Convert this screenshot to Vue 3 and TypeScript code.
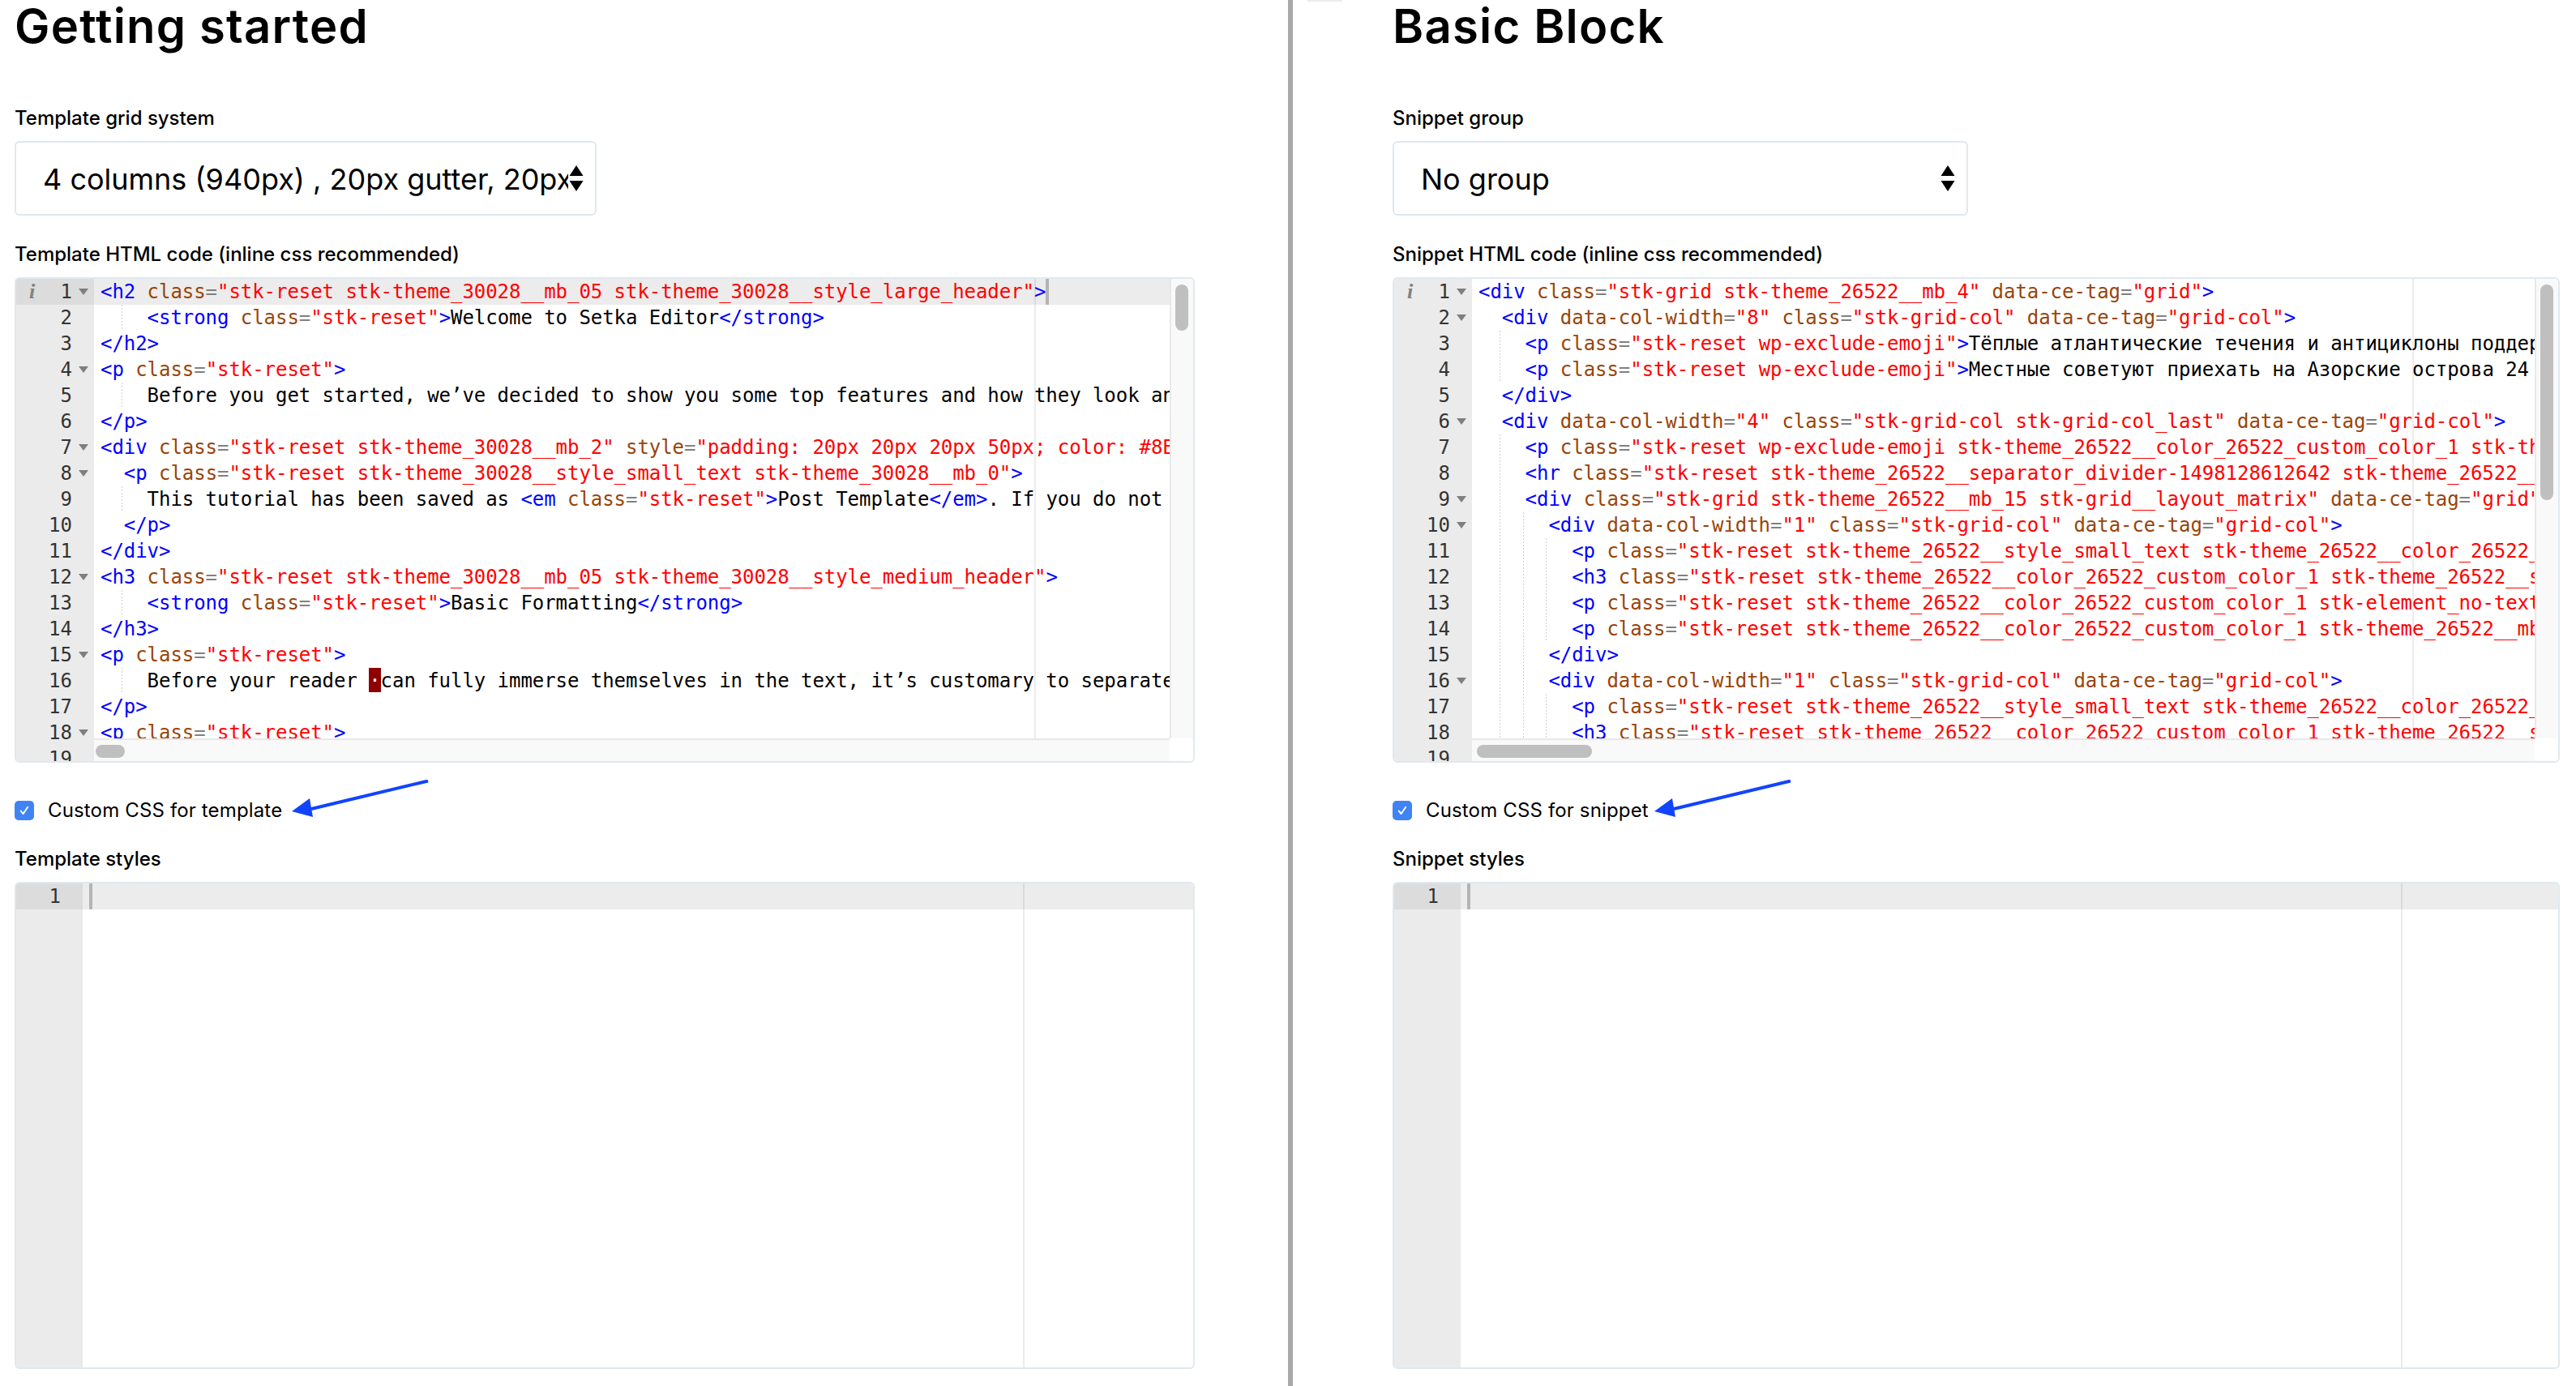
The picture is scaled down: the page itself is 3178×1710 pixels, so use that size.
<script setup lang="ts">
type Token = { t: string; c: string }
type Line = { guides: number; pad: string; tokens: Token[]; fold: boolean; info: boolean; cursor: boolean; active: boolean }

function tokenize(src: string): Token[] {
  const out: Token[] = []
  let i = 0
  let inTag = false
  const push = (t: string, c: string) => { if (t) out.push({ t, c }) }
  while (i < src.length) {
    if (!inTag) {
      const ch = src[i]
      if (ch === '\u0007') { push('·', 'bad'); i++; continue }
      if (ch === '<') {
        const m = /^<\/?[a-z0-9]+/.exec(src.slice(i))
        if (m) { push(m[0], 'tag'); i += m[0].length; inTag = true; continue }
      }
      const next = src.slice(i).search(/[<\u0007]/)
      const len = next === -1 ? src.length - i : Math.max(next, 1)
      push(src.substr(i, len), 'txt')
      i += len
    } else {
      const rest = src.slice(i)
      let m: RegExpExecArray | null
      if ((m = /^\s+/.exec(rest))) { push(m[0], 'txt') }
      else if ((m = /^>/.exec(rest))) { push(m[0], 'tag'); inTag = false }
      else if ((m = /^=/.exec(rest))) { push(m[0], 'eq') }
      else if ((m = /^"[^"]*"?/.exec(rest))) { push(m[0], 'str') }
      else if ((m = /^[^\s=>]+/.exec(rest))) { push(m[0], 'attr') }
      else { m = /^./.exec(rest) as RegExpExecArray; push(m[0], 'txt') }
      i += m[0].length
    }
  }
  return out
}

function build(rows: string[], foldAt: number[], opts: { info?: boolean; active?: boolean } = {}): Line[] {
  return rows.map((src, idx) => {
    const indent = (/^ */.exec(src) as RegExpExecArray)[0].length
    const guides = Math.max(0, Math.floor(indent / 2) - 1)
    const pad = ' '.repeat(indent - guides * 2)
    return {
      guides,
      pad,
      tokens: tokenize(src.slice(indent)),
      fold: foldAt.includes(idx + 1),
      info: !!opts.info && idx === 0,
      cursor: !!opts.active && idx === 0,
      active: !!opts.active && idx === 0,
    }
  })
}

const templateLines = build([
  '<h2 class="stk-reset stk-theme_30028__mb_05 stk-theme_30028__style_large_header">',
  '    <strong class="stk-reset">Welcome to Setka Editor</strong>',
  '</h2>',
  '<p class="stk-reset">',
  '    Before you get started, we’ve decided to show you some top features and how they look and',
  '</p>',
  '<div class="stk-reset stk-theme_30028__mb_2" style="padding: 20px 20px 20px 50px; color: #8B8B8B">',
  '  <p class="stk-reset stk-theme_30028__style_small_text stk-theme_30028__mb_0">',
  '    This tutorial has been saved as <em class="stk-reset">Post Template</em>. If you do not need',
  '  </p>',
  '</div>',
  '<h3 class="stk-reset stk-theme_30028__mb_05 stk-theme_30028__style_medium_header">',
  '    <strong class="stk-reset">Basic Formatting</strong>',
  '</h3>',
  '<p class="stk-reset">',
  '    Before your reader \u0007can fully immerse themselves in the text, it’s customary to separate',
  '</p>',
  '<p class="stk-reset">',
  '',
], [1, 4, 7, 8, 12, 15, 18], { info: true, active: true })

const snippetLines = build([
  '<div class="stk-grid stk-theme_26522__mb_4" data-ce-tag="grid">',
  '  <div data-col-width="8" class="stk-grid-col" data-ce-tag="grid-col">',
  '    <p class="stk-reset wp-exclude-emoji">Тёплые атлантические течения и антициклоны поддерживают',
  '    <p class="stk-reset wp-exclude-emoji">Местные советуют приехать на Азорские острова 24 часа',
  '  </div>',
  '  <div data-col-width="4" class="stk-grid-col stk-grid-col_last" data-ce-tag="grid-col">',
  '    <p class="stk-reset wp-exclude-emoji stk-theme_26522__color_26522_custom_color_1 stk-theme_26522__style',
  '    <hr class="stk-reset stk-theme_26522__separator_divider-1498128612642 stk-theme_26522__color_26522',
  '    <div class="stk-grid stk-theme_26522__mb_15 stk-grid__layout_matrix" data-ce-tag="grid">',
  '      <div data-col-width="1" class="stk-grid-col" data-ce-tag="grid-col">',
  '        <p class="stk-reset stk-theme_26522__style_small_text stk-theme_26522__color_26522_custom',
  '        <h3 class="stk-reset stk-theme_26522__color_26522_custom_color_1 stk-theme_26522__style_custom',
  '        <p class="stk-reset stk-theme_26522__color_26522_custom_color_1 stk-element_no-text stk-theme',
  '        <p class="stk-reset stk-theme_26522__color_26522_custom_color_1 stk-theme_26522__mb_05 stk-reset',
  '      </div>',
  '      <div data-col-width="1" class="stk-grid-col" data-ce-tag="grid-col">',
  '        <p class="stk-reset stk-theme_26522__style_small_text stk-theme_26522__color_26522_custom',
  '        <h3 class="stk-reset stk-theme_26522__color_26522_custom_color_1 stk-theme_26522__style_custom',
  '',
], [1, 2, 6, 9, 10, 16], { info: true })

const panels = [
  {
    title: 'Getting started',
    groupLabel: 'Template grid system',
    selectValue: '4 columns (940px) , 20px gutter, 20px margin',
    selectClass: 'sel-left',
    codeLabel: 'Template HTML code (inline css recommended)',
    lines: templateLines,
    vThumb: 'thumb-v-short',
    hThumb: 'thumb-h-short',
    check: 'Custom CSS for template',
    arrowLeft: 340,
    stylesLabel: 'Template styles',
    cls: 'panel-left',
  },
  {
    title: 'Basic Block',
    groupLabel: 'Snippet group',
    selectValue: 'No group',
    selectClass: 'sel-right',
    codeLabel: 'Snippet HTML code (inline css recommended)',
    lines: snippetLines,
    vThumb: 'thumb-v-long',
    hThumb: 'thumb-h-long',
    check: 'Custom CSS for snippet',
    arrowLeft: 321,
    stylesLabel: 'Snippet styles',
    cls: 'panel-right',
  },
]
</script>

<template>
  <div class="page">
    <span class="top-tab"></span>
    <section v-for="p in panels" :key="p.title" class="panel" :class="p.cls">
      <h1 class="title">{{ p.title }}</h1>

      <div class="label first">{{ p.groupLabel }}</div>
      <div class="select" :class="p.selectClass">
        <span class="select-value">{{ p.selectValue }}</span>
        <svg class="select-arrows" width="18" height="32" viewBox="0 0 18 32">
          <path d="M9 0 L17.5 13 L0.5 13 Z" fill="#000" />
          <path d="M0.5 19 L17.5 19 L9 32 Z" fill="#000" />
        </svg>
      </div>

      <div class="label second">{{ p.codeLabel }}</div>
      <div class="editor editor-code">
        <div class="gutter">
          <div
            v-for="(l, i) in p.lines"
            :key="i"
            class="g-row"
            :class="{ 'g-active': l.active }"
          >
            <span v-if="l.info" class="g-info">i</span>
            <span class="g-num">{{ i + 1 }}</span>
            <span class="g-fold"><i v-if="l.fold" class="fold-tri"></i></span>
          </div>
        </div>
        <div class="main">
          <div class="main-top">
            <div class="code">
              <span class="print-margin"></span>
              <div
                v-for="(l, i) in p.lines"
                :key="i"
                class="c-row"
                :class="{ 'c-active': l.active }"
              >
                <span v-for="g in l.guides" :key="g" class="guide"></span>
                <span>{{ l.pad }}</span>
                <span v-for="(tk, j) in l.tokens" :key="j" :class="tk.c">{{ tk.t }}</span>
                <span v-if="l.cursor" class="cursor"></span>
              </div>
            </div>
            <div class="vbar"><span class="thumb-v" :class="p.vThumb"></span></div>
          </div>
          <div class="main-bottom">
            <div class="hbar"><span class="thumb-h" :class="p.hThumb"></span></div>
            <div class="corner"></div>
          </div>
        </div>
      </div>

      <div class="check-row">
        <span class="checkbox">
          <svg width="14" height="14" viewBox="0 0 14 14">
            <path d="M2.8 7.6 L5.6 11 L11.2 2.8" fill="none" stroke="#fff" stroke-width="2" stroke-linecap="round" stroke-linejoin="round" />
          </svg>
        </span>
        <span class="check-text">{{ p.check }}</span>
        <svg class="arrow" :style="{ left: p.arrowLeft + 'px' }" width="174" height="50" viewBox="0 0 174 50">
          <path d="M170 1.5 L26 36" stroke="#1144ff" stroke-width="4" fill="none" />
          <path d="M2 39 L24 23 L28 46 Z" fill="#1144ff" />
        </svg>
      </div>

      <div class="label third">{{ p.stylesLabel }}</div>
      <div class="editor editor-css">
        <div class="gutter gutter-narrow">
          <div class="g-row g-active">
            <span class="g-num">1</span>
            <span class="g-fold"></span>
          </div>
        </div>
        <div class="code code-css">
          <span class="print-margin"></span>
          <div class="c-row c-active"><span class="cursor cursor-empty"></span></div>
        </div>
      </div>
    </section>
  </div>
</template>

<style scoped>
.page {
  position: relative;
  display: grid;
  grid-template-columns: 1589px 1fr;
  width: 3178px;
  height: 1710px;
  overflow: hidden;
  background: #fff;
  color: #000;
  font-family: Inter, "Noto Sans", sans-serif;
}
.top-tab {
  position: absolute;
  left: 1613px;
  top: 0;
  width: 43px;
  height: 2px;
  background: #ececec;
}
.panel {
  display: flex;
  flex-direction: column;
  min-width: 0;
}
.panel-left {
  padding-left: 18px;
  padding-right: 115px;
}
.panel-right {
  border-left: 6px solid #a9a9a9;
  padding-left: 123px;
  padding-right: 20px;
}
.title {
  margin: 0 0 6px;
  height: 64px;
  font-size: 58px;
  line-height: 64px;
  font-weight: 600;
  letter-spacing: 1.2px;
}
.label {
  height: 30px;
  line-height: 30px;
  font-size: 24px;
  font-weight: 500;
  position: relative;
  top: 1px;
}
.label.first { margin-top: 60px; margin-bottom: 14px; }
.label.second { margin-top: 32px; margin-bottom: 14px; }
.label.third { margin-top: 33px; margin-bottom: 13px; top: 0; }

.select {
  display: flex;
  align-items: center;
  box-sizing: border-box;
  height: 92px;
  padding-left: 33px;
  padding-right: 14px;
  border: 2px solid #e0e8ef;
  border-radius: 6px;
}
.sel-left { width: 718px; }
.sel-right { width: 710px; }
.select-value {
  flex: 1;
  min-width: 0;
  margin-right: 2px;
  padding-top: 2px;
  overflow: hidden;
  white-space: nowrap;
  font-size: 36px;
  line-height: 48px;
}
.select-arrows {
  flex: none;
  margin-left: -1px;
}

.editor {
  display: flex;
  box-sizing: border-box;
  border: 2px solid #e0e8ef;
  border-radius: 6px;
  overflow: hidden;
  font-family: "DejaVu Sans Mono", "Liberation Mono", monospace;
  font-size: 24px;
  line-height: 32px;
}
.editor-code { height: 599px; }
.editor-css { height: 601px; }

.gutter {
  flex: none;
  width: 96px;
  overflow: hidden;
  background: #ebebeb;
  color: #333;
}
.gutter-narrow { width: 82px; }
.g-row {
  display: flex;
  justify-content: flex-end;
  height: 32px;
}
.g-active { background: #dcdcdc; }
.g-info {
  margin-right: auto;
  padding-left: 16px;
  font-family: "Liberation Serif", serif;
  font-style: italic;
  font-weight: 700;
  font-size: 26px;
  color: #808080;
}
.g-num { flex: none; }
.g-fold {
  flex: none;
  width: 27px;
  display: flex;
  align-items: center;
  padding-left: 8px;
  box-sizing: border-box;
}
.fold-tri {
  width: 0;
  height: 0;
  border-left: 6px solid transparent;
  border-right: 6px solid transparent;
  border-top: 8px solid #7f7f7f;
}

.main {
  flex: 1;
  min-width: 0;
  display: flex;
  flex-direction: column;
}
.main-top {
  flex: 1;
  min-height: 0;
  display: flex;
}
.code {
  position: relative;
  flex: 1;
  min-width: 0;
  overflow: hidden;
}
.print-margin {
  position: absolute;
  left: calc(8px + 80 * 14.4px);
  top: 0;
  bottom: 0;
  width: 2px;
  background: rgba(0, 0, 0, 0.075);
}
.c-row {
  height: 32px;
  padding-left: 8px;
  white-space: pre;
  letter-spacing: -0.05px;
}
.c-active { background: #ececec; }
.guide {
  display: inline-block;
  width: 28.8px;
  height: 32px;
  vertical-align: top;
  background-image: repeating-linear-gradient(to bottom, #cfcfcf 0 2px, transparent 2px 4px);
  background-size: 1px 100%;
  background-repeat: no-repeat;
  background-position: calc(100% - 2px) 0;
}
.tag { color: #0000ff; }
.attr { color: #994409; }
.str { color: #ff0000; }
.eq { color: #808080; }
.txt { color: #000; }
.bad {
  display: inline-block;
  height: 30px;
  vertical-align: top;
  background: #8f0000;
  color: #fff;
}
.cursor {
  display: inline-block;
  width: 4px;
  height: 32px;
  vertical-align: top;
  background: #b4b4b4;
}
.vbar {
  flex: none;
  box-sizing: border-box;
  width: 29px;
  padding: 7px 0 0 5px;
  border-left: 2px solid #e8e8e8;
  background: #f9f9f9;
}
.thumb-v {
  display: block;
  width: 16px;
  border-radius: 8px;
  background: #bfbfbf;
}
.thumb-v-short { height: 57px; }
.thumb-v-long { height: 266px; }
.main-bottom {
  flex: none;
  height: 28px;
  display: flex;
}
.hbar {
  flex: 1;
  box-sizing: border-box;
  padding-top: 6px;
  border-top: 2px solid #e8e8e8;
  background: #f9f9f9;
}
.corner {
  flex: none;
  width: 29px;
  background: #fff;
}
.thumb-h {
  display: block;
  height: 16px;
  border-radius: 8px;
  background: #bfbfbf;
}
.thumb-h-short { width: 36px; margin-left: 2px; }
.thumb-h-long { width: 142px; margin-left: 6px; }

.check-row {
  position: relative;
  display: flex;
  align-items: center;
  gap: 17px;
  height: 24px;
  margin-top: 47px;
}
.checkbox {
  flex: none;
  display: flex;
  align-items: center;
  justify-content: center;
  width: 24px;
  height: 24px;
  border-radius: 5px;
  background: #3f83f5;
}
.check-text {
  font-size: 24px;
  line-height: 30px;
  font-weight: 400;
  letter-spacing: 0.15px;
}
.arrow {
  position: absolute;
  top: -26px;
}
</style>

<style>
html, body { margin: 0; background: #fff; }
</style>
